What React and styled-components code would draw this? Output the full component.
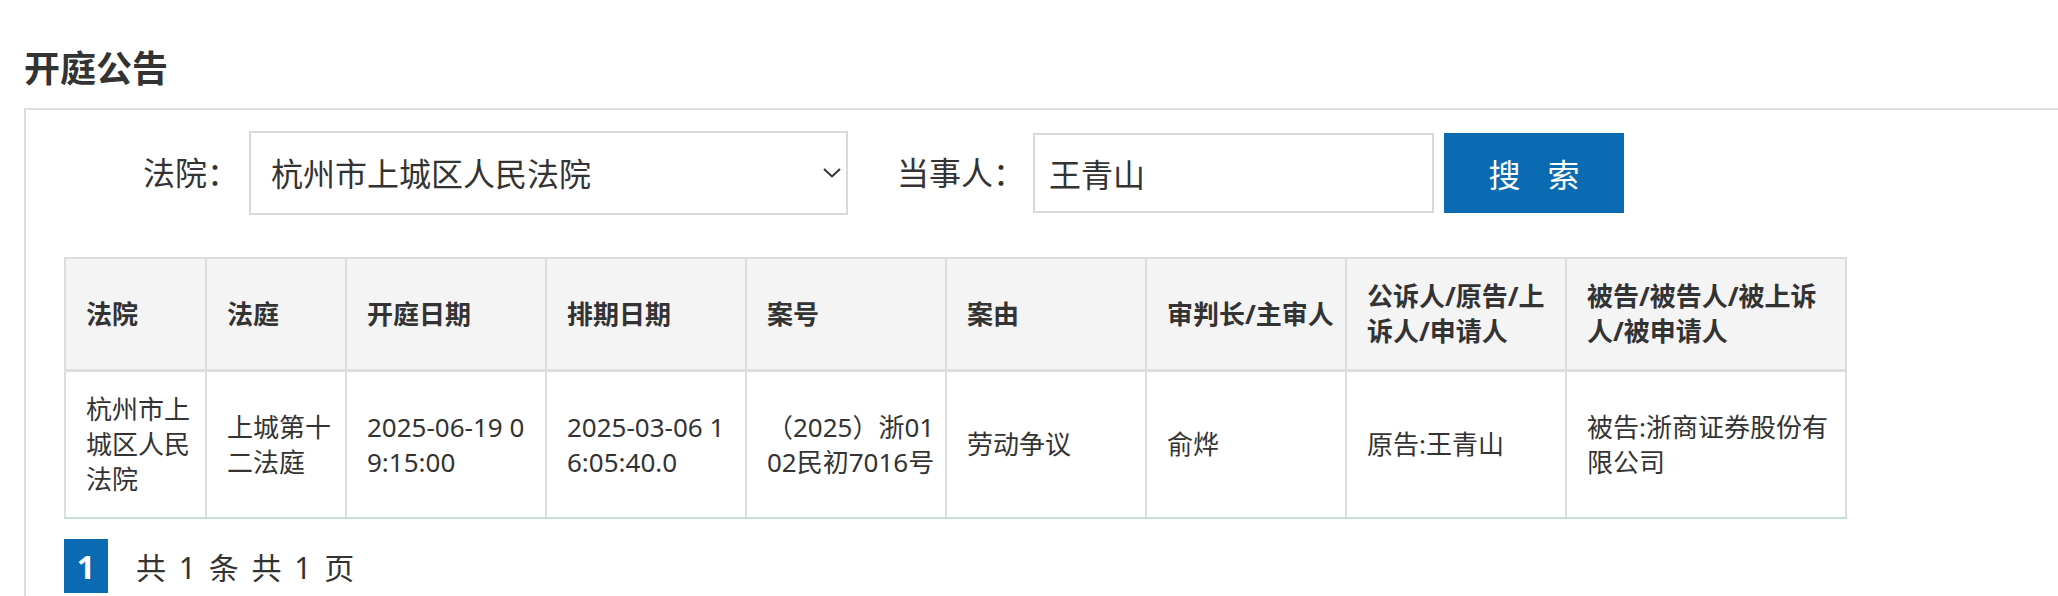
import React from "react";
import styled, { createGlobalStyle } from "styled-components";

const GlobalStyle = createGlobalStyle`
  html, body { margin: 0; padding: 0; background: #fff; overflow: hidden; }
  body {
    font-family: "Noto Sans", "Noto Sans CJK SC", sans-serif;
    color: #333;
  }
`;

const Page = styled.div`
  padding: 44px 0 0 24px;
`;

const Title = styled.h2`
  margin: 0 0 14px;
  font-size: 36px;
  line-height: 50px;
  font-weight: 700;
  color: #333;
`;

const Panel = styled.section`
  border: 2px solid #ddd;
  margin-right: -40px;
  padding: 21px 0 40px 38px;
`;

const FormRow = styled.div`
  display: flex;
  align-items: center;
  padding-left: 79px;
  margin-bottom: 42px;
`;

const Label = styled.label`
  font-size: 32px;
  line-height: 1;
  margin-right: ${(p) => p.$gap || 10}px;
  color: #333;
  white-space: nowrap;
`;

const SelectWrap = styled.div`
  position: relative;
  width: 599px;
  height: 84px;
  margin-right: 49px;
`;

const Select = styled.select`
  appearance: none;
  -webkit-appearance: none;
  width: 100%;
  height: 100%;
  box-sizing: border-box;
  border: 2px solid #d9d9d9;
  border-radius: 0;
  background: #fff;
  font: inherit;
  font-size: 32px;
  color: #333;
  padding: 0 40px 0 20px;
  outline: none;
`;

const Chevron = styled.svg`
  position: absolute;
  right: 7px;
  top: 50%;
  transform: translateY(-50%);
  width: 18px;
  height: 10px;
  pointer-events: none;
`;

const TextInput = styled.input`
  width: 401px;
  height: 80px;
  box-sizing: border-box;
  border: 2px solid #d9d9d9;
  border-radius: 0;
  font: inherit;
  font-size: 32px;
  color: #333;
  padding: 0 14px;
  outline: none;
`;

const SearchButton = styled.button`
  margin-left: 10px;
  width: 180px;
  height: 80px;
  border: none;
  border-radius: 0;
  background: #0a6bb3;
  color: #fff;
  font: inherit;
  font-size: 32px;
  display: flex;
  align-items: center;
  justify-content: center;
  gap: 27px;
  padding: 0;
`;

const Table = styled.table`
  border-collapse: collapse;
  table-layout: fixed;
  width: 1781px;
  border: 2px solid #ddd;
`;

const Th = styled.th`
  background: #f4f4f4;
  font-weight: 700;
  font-size: 26px;
  line-height: 35px;
  text-align: left;
  vertical-align: middle;
  padding: 20px 10px 20px 20px;
  border: 2px solid #ddd;
  border-bottom: 3px solid #ddd;
  word-break: break-all;
  color: #333;
`;

const Td = styled.td`
  font-size: 26px;
  line-height: 35px;
  text-align: left;
  vertical-align: middle;
  padding: 20px 10px 20px 20px;
  border: 2px solid #ddd;
  border-bottom: 2px solid #c4dfd0;
  word-break: break-all;
  color: #333;
`;

const Pager = styled.div`
  display: flex;
  align-items: center;
  margin-top: 20px;
  gap: 28px;
`;

const PageNum = styled.span`
  width: 44px;
  height: 54px;
  background: #0a6bb3;
  color: #fff;
  font-weight: 700;
  font-size: 32px;
  display: flex;
  align-items: center;
  justify-content: center;
`;

const PageInfo = styled.span`
  font-size: 30px;
  word-spacing: 5px;
  color: #333;
`;

const columns = [
  { title: "法院", width: 141 },
  { title: "法庭", width: 140 },
  { title: "开庭日期", width: 200 },
  { title: "排期日期", width: 200 },
  { title: "案号", width: 200 },
  { title: "案由", width: 200 },
  { title: "审判长/主审人", width: 200 },
  { title: "公诉人/原告/上诉人/申请人", width: 220 },
  { title: "被告/被告人/被上诉人/被申请人", width: 280 },
];

const row = [
  "杭州市上城区人民法院",
  "上城第十二法庭",
  "2025-06-19 09:15:00",
  "2025-03-06 16:05:40.0",
  "（2025）浙0102民初7016号",
  "劳动争议",
  "俞烨",
  "原告:王青山",
  "被告:浙商证券股份有限公司",
];

export default function App() {
  return (
    <>
      <GlobalStyle />
      <Page>
        <Title>开庭公告</Title>
        <Panel>
          <FormRow>
            <Label>法院：</Label>
            <SelectWrap>
              <Select defaultValue="杭州市上城区人民法院">
                <option>杭州市上城区人民法院</option>
              </Select>
              <Chevron viewBox="0 0 18 10" fill="none">
                <path d="M1 1 L9 8.5 L17 1" stroke="#333" strokeWidth="2" />
              </Chevron>
            </SelectWrap>
            <Label $gap={8}>当事人：</Label>
            <TextInput defaultValue="王青山" />
            <SearchButton type="button">
              <span>搜</span>
              <span>索</span>
            </SearchButton>
          </FormRow>
          <Table>
            <colgroup>
              {columns.map((c) => (
                <col key={c.title} style={{ width: c.width }} />
              ))}
            </colgroup>
            <thead>
              <tr>
                {columns.map((c) => (
                  <Th key={c.title}>{c.title}</Th>
                ))}
              </tr>
            </thead>
            <tbody>
              <tr>
                {row.map((v, i) => (
                  <Td key={i}>{v}</Td>
                ))}
              </tr>
            </tbody>
          </Table>
          <Pager>
            <PageNum>1</PageNum>
            <PageInfo>共 1 条 共 1 页</PageInfo>
          </Pager>
        </Panel>
      </Page>
    </>
  );
}
